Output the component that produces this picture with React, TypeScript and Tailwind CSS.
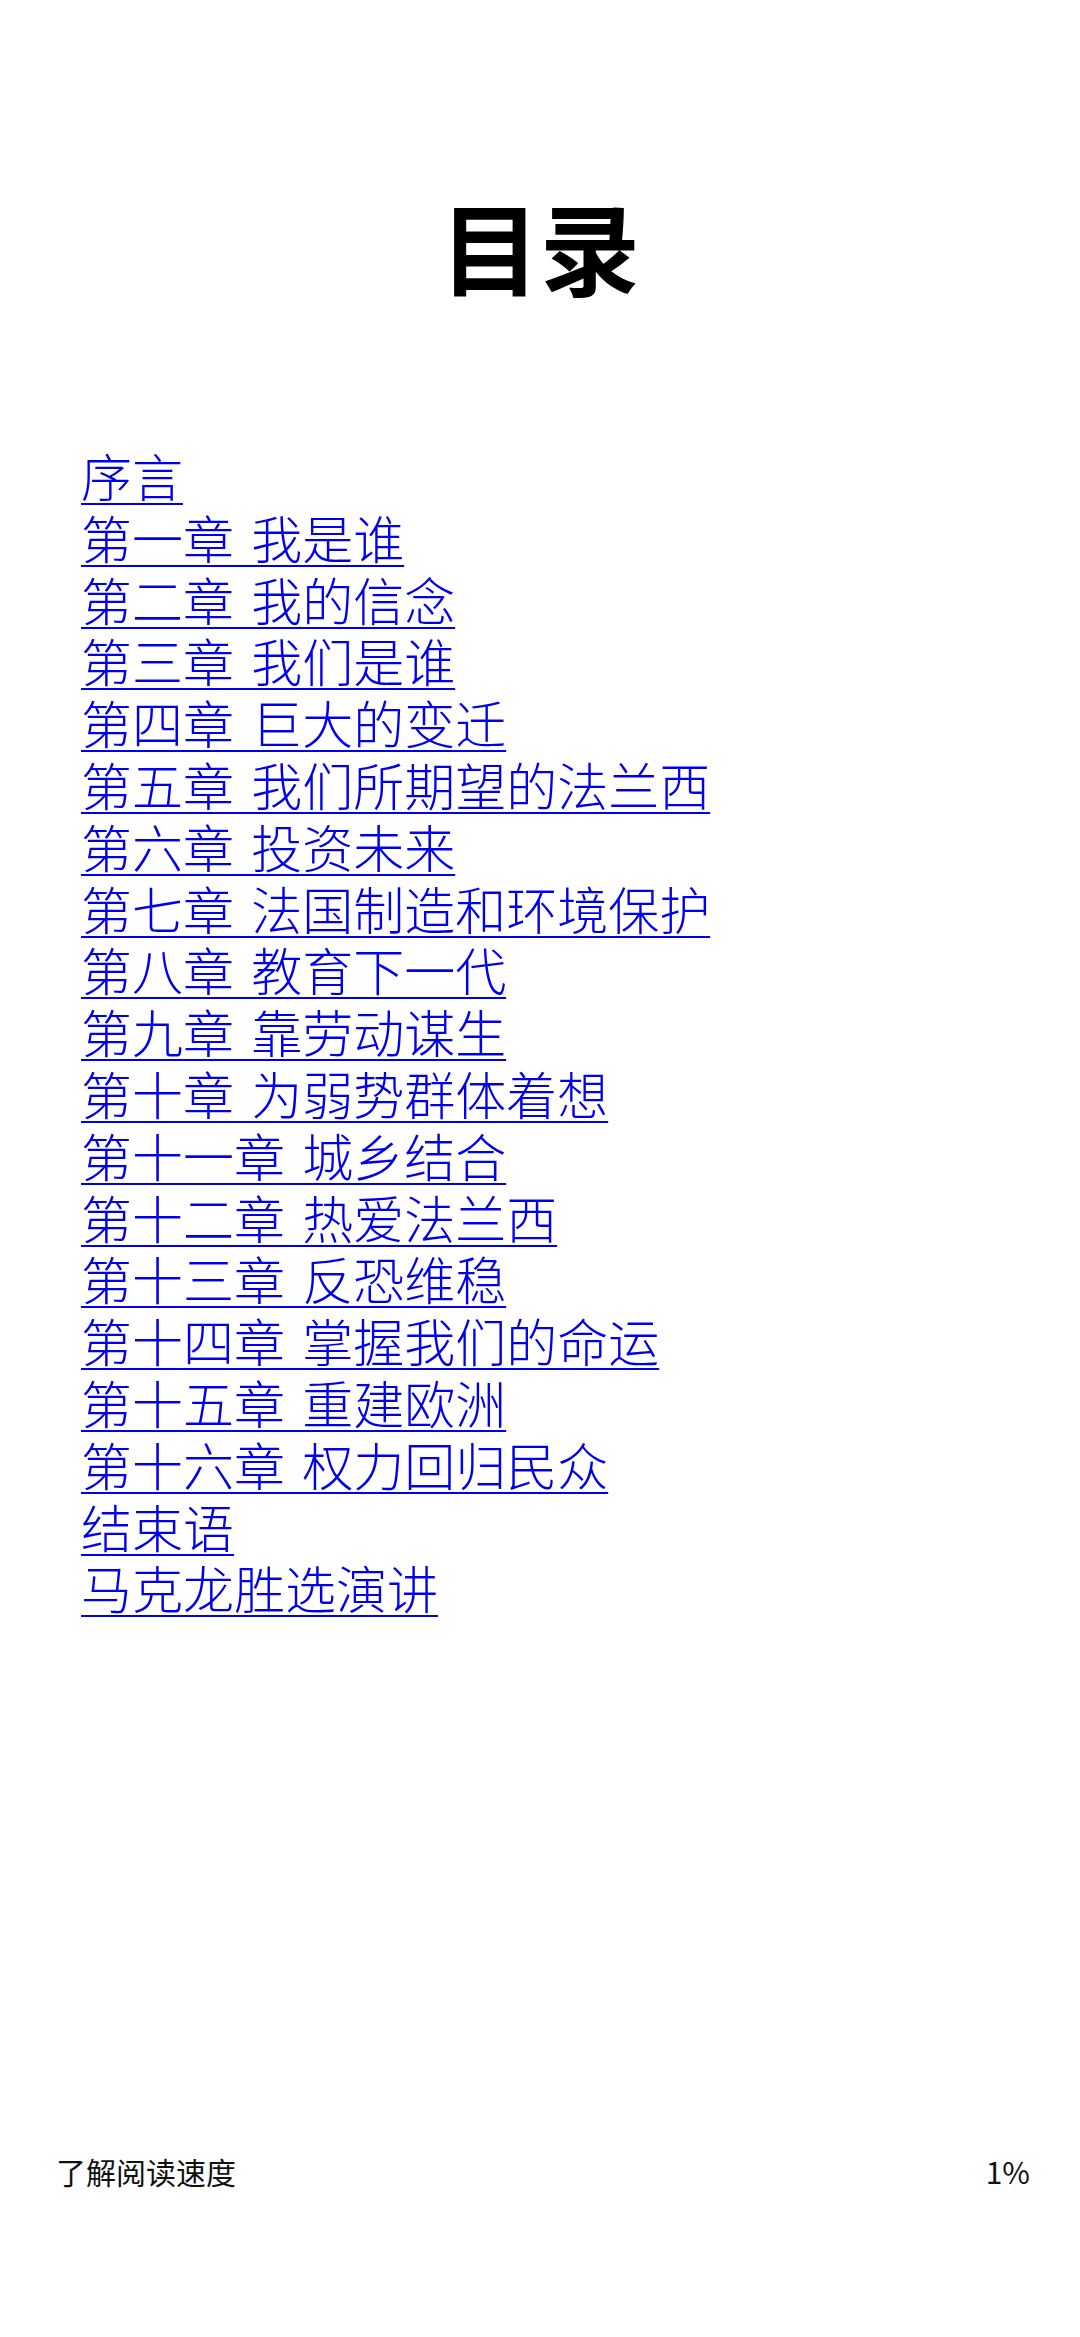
import React from "react";

const chapters = [
  "序言",
  "第一章 我是谁",
  "第二章 我的信念",
  "第三章 我们是谁",
  "第四章 巨大的变迁",
  "第五章 我们所期望的法兰西",
  "第六章 投资未来",
  "第七章 法国制造和环境保护",
  "第八章 教育下一代",
  "第九章 靠劳动谋生",
  "第十章 为弱势群体着想",
  "第十一章 城乡结合",
  "第十二章 热爱法兰西",
  "第十三章 反恐维稳",
  "第十四章 掌握我们的命运",
  "第十五章 重建欧洲",
  "第十六章 权力回归民众",
  "结束语",
  "马克龙胜选演讲",
];

export default function App() {
  return (
    <div className="flex min-h-[2337px] flex-col bg-white font-['Noto_Sans_CJK_SC',sans-serif]">
      {/* Title */}
      <h1 className="pt-[185px] text-center text-[100px] font-bold leading-[120px] text-black">
        目录
      </h1>

      {/* Table of contents */}
      <nav className="mt-[144px] flex flex-col items-start pl-[81px] font-['Liberation_Sans','Noto_Sans_CJK_SC',sans-serif]">
        {chapters.map((c) => (
          <a
            key={c}
            href="#"
            className="text-[51px] leading-[61.8px] font-light text-[#0000ee] underline decoration-2 underline-offset-[6px] [word-spacing:3px]"
          >
            {c}
          </a>
        ))}
      </nav>

      {/* Footer */}
      <div className="mt-auto flex items-center justify-between pl-[56px] pr-[50px] pb-[146px] text-[30px] leading-[40px] text-[#111]">
        <span>了解阅读速度</span>
        <span>1%</span>
      </div>
    </div>
  );
}
